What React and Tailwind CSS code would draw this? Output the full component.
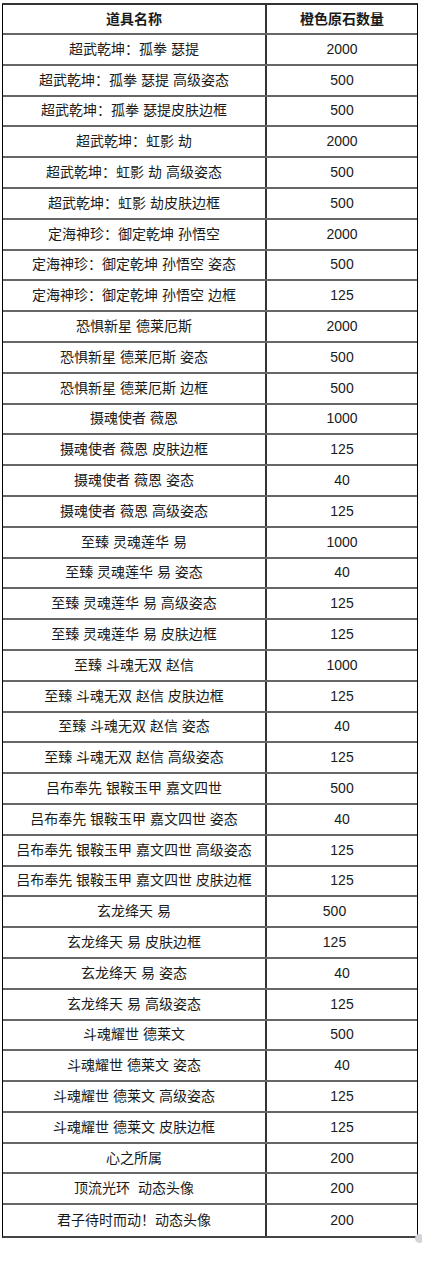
import React from "react";

const rows = [
    ["超武乾坤：孤拳 瑟提", "2000"],
    ["超武乾坤：孤拳 瑟提 高级姿态", "500"],
    ["超武乾坤：孤拳 瑟提皮肤边框", "500"],
    ["超武乾坤：虹影 劫", "2000"],
    ["超武乾坤：虹影 劫 高级姿态", "500"],
    ["超武乾坤：虹影 劫皮肤边框", "500"],
    ["定海神珍：御定乾坤 孙悟空", "2000"],
    ["定海神珍：御定乾坤 孙悟空 姿态", "500"],
    ["定海神珍：御定乾坤 孙悟空 边框", "125"],
    ["恐惧新星 德莱厄斯", "2000"],
    ["恐惧新星 德莱厄斯 姿态", "500"],
    ["恐惧新星 德莱厄斯 边框", "500"],
    ["摄魂使者 薇恩", "1000"],
    ["摄魂使者 薇恩 皮肤边框", "125"],
    ["摄魂使者 薇恩 姿态", "40"],
    ["摄魂使者 薇恩 高级姿态", "125"],
    ["至臻 灵魂莲华 易", "1000"],
    ["至臻 灵魂莲华 易 姿态", "40"],
    ["至臻 灵魂莲华 易 高级姿态", "125"],
    ["至臻 灵魂莲华 易 皮肤边框", "125"],
    ["至臻 斗魂无双 赵信", "1000"],
    ["至臻 斗魂无双 赵信 皮肤边框", "125"],
    ["至臻 斗魂无双 赵信 姿态", "40"],
    ["至臻 斗魂无双 赵信 高级姿态", "125"],
    ["吕布奉先 银鞍玉甲 嘉文四世", "500"],
    ["吕布奉先 银鞍玉甲 嘉文四世 姿态", "40"],
    ["吕布奉先 银鞍玉甲 嘉文四世 高级姿态", "125"],
    ["吕布奉先 银鞍玉甲 嘉文四世 皮肤边框", "125"],
    ["玄龙绛天 易", "500", true],
    ["玄龙绛天 易 皮肤边框", "125", true],
    ["玄龙绛天 易 姿态", "40"],
    ["玄龙绛天 易 高级姿态", "125"],
    ["斗魂耀世 德莱文", "500"],
    ["斗魂耀世 德莱文 姿态", "40"],
    ["斗魂耀世 德莱文 高级姿态", "125"],
    ["斗魂耀世 德莱文 皮肤边框", "125"],
    ["心之所属", "200"],
    ["顶流光环  动态头像", "200"],
    ["君子待时而动！动态头像", "200"],
];

function App() {
    return (
        <div className="min-h-screen bg-white pt-[3px] pl-[2px] text-[14px] text-[#1a1a1a] font-['Liberation_Sans','Noto_Sans_CJK_SC',sans-serif]">
            <div className="relative w-[416px] border-l border-r border-black border-t-2 border-t-[#333] border-b-2 border-b-[#444]">
                <div className="flex h-[30px] border-b-2 border-[#666] font-bold">
                    <div className="w-[264px] border-r-2 border-[#333] flex items-center justify-center">道具名称</div>
                    <div className="flex-1 flex items-center justify-center">橙色原石数量</div>
                </div>
                {rows.map(([name, qty, shifted], i) => (
                    <div
                        key={i}
                        className={
                            i === rows.length - 1
                                ? "flex h-[31px]"
                                : "flex h-[30.8px] border-b-2 border-[#666]"
                        }
                    >
                        <div className="w-[264px] border-r-2 border-[#333] flex items-center justify-center whitespace-pre">
                            {name}
                        </div>
                        <div className={shifted ? "flex-1 flex items-center justify-center pr-[15px]" : "flex-1 flex items-center justify-center"}>
                            {qty}
                        </div>
                    </div>
                ))}
                <div className="absolute -right-[7px] -bottom-[7px] w-[9px] h-[9px] rounded-full bg-[#d4d4d8]" />
            </div>
        </div>
    );
}

export default App;
